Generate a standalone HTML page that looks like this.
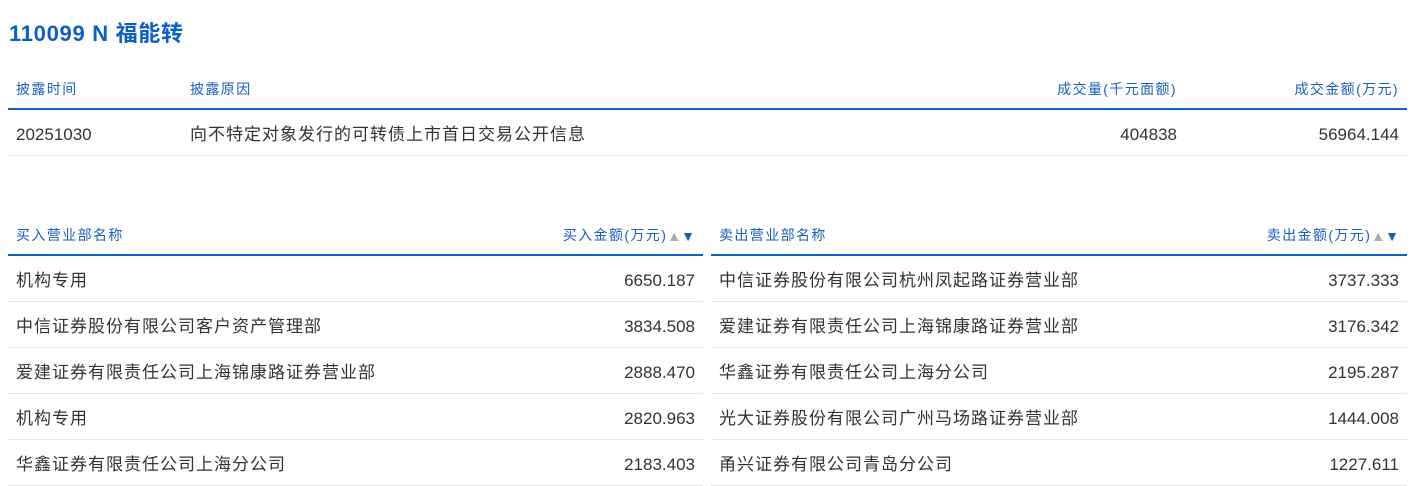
<!DOCTYPE html><html><head><meta charset="utf-8"><style>
body{margin:0;background:#fff;font-family:"Liberation Sans","Noto Sans CJK SC",sans-serif;color:#333;}
h1{position:absolute;left:9px;top:16px;margin:0;font-size:22px;font-weight:bold;color:#0a5fc8;letter-spacing:0.7px}
table{position:absolute;border-collapse:collapse;table-layout:fixed}
th{font-weight:normal;color:#1a5fbf;font-size:14px;height:37px;border-bottom:2px solid #0b62c4;padding:0 8px;text-align:left;letter-spacing:1.4px}
td{font-size:17px;height:41px;border-bottom:1px solid #e6e6e6;padding:4px 8px 0}
.c{position:relative;top:-2px;letter-spacing:1px}
th .c{letter-spacing:1.4px;top:-1px}
.r{text-align:right}
.s{color:#aaa;font-size:14px;letter-spacing:0}.s b{color:#1a5fbf;font-weight:normal}
</style></head><body>
<h1>110099 N 福能转</h1>
<table style="left:8px;top:71px;width:1399px">
<tr><th style="width:158px"><span class="c">披露时间</span></th><th><span class="c">披露原因</span></th><th class="r" style="width:210px"><span class="c">成交量(千元面额)</span></th><th class="r" style="width:206px"><span class="c">成交金额(万元)</span></th></tr>
<tr><td>20251030</td><td><span class="c">向不特定对象发行的可转债上市首日交易公开信息</span></td><td class="r">404838</td><td class="r">56964.144</td></tr>
</table>
<table style="left:8px;top:217px;width:695px">
<tr><th><span class="c">买入营业部名称</span></th><th class="r" style="width:220px"><span class="c">买入金额(万元)</span><span class="s">▲<b>▼</b></span></th></tr>
<tr><td><span class="c">机构专用</span></td><td class="r">6650.187</td></tr>
<tr><td><span class="c">中信证券股份有限公司客户资产管理部</span></td><td class="r">3834.508</td></tr>
<tr><td><span class="c">爱建证券有限责任公司上海锦康路证券营业部</span></td><td class="r">2888.470</td></tr>
<tr><td><span class="c">机构专用</span></td><td class="r">2820.963</td></tr>
<tr><td><span class="c">华鑫证券有限责任公司上海分公司</span></td><td class="r">2183.403</td></tr>
</table>
<table style="left:711px;top:217px;width:696px">
<tr><th><span class="c">卖出营业部名称</span></th><th class="r" style="width:220px"><span class="c">卖出金额(万元)</span><span class="s">▲<b>▼</b></span></th></tr>
<tr><td><span class="c">中信证券股份有限公司杭州凤起路证券营业部</span></td><td class="r">3737.333</td></tr>
<tr><td><span class="c">爱建证券有限责任公司上海锦康路证券营业部</span></td><td class="r">3176.342</td></tr>
<tr><td><span class="c">华鑫证券有限责任公司上海分公司</span></td><td class="r">2195.287</td></tr>
<tr><td><span class="c">光大证券股份有限公司广州马场路证券营业部</span></td><td class="r">1444.008</td></tr>
<tr><td><span class="c">甬兴证券有限公司青岛分公司</span></td><td class="r">1227.611</td></tr>
</table>
</body></html>
